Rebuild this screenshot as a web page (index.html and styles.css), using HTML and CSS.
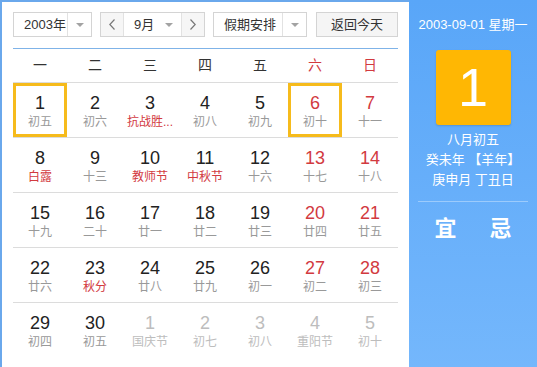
FILE: index.html
```html
<!DOCTYPE html>
<html lang="zh-CN">
<head>
  <meta charset="UTF-8" />
  <title>万年历</title>
  <link rel="stylesheet" href="styles.css">
</head>
<body>
  <div class="cal">
    <div class="main">
      <div class="toolbar">
        <div class="select year">
          <span class="label">2003年</span>
          <span class="drop"><i class="caret"></i></span>
        </div>
        <div class="select month">
          <span class="arrow"><svg width="6" height="11" viewBox="0 0 6 11"><polyline points="5.5,0.5 0.8,5.5 5.5,10.5" fill="none" stroke="#777" stroke-width="1.2"/></svg></span>
          <span class="label">9月<i class="caret"></i></span>
          <span class="arrow"><svg width="6" height="11" viewBox="0 0 6 11"><polyline points="0.5,0.5 5.2,5.5 0.5,10.5" fill="none" stroke="#777" stroke-width="1.2"/></svg></span>
        </div>
        <div class="select holiday">
          <span class="label">假期安排</span>
          <span class="drop"><i class="caret"></i></span>
        </div>
        <div class="today-btn">返回今天</div>
      </div>

      <div class="weekhead">
        <span>一</span><span>二</span><span>三</span><span>四</span><span>五</span><span class="red">六</span><span class="red">日</span>
      </div>

      <div class="days">
        <div class="cell"><div class="day selected"><b>1</b><small>初五</small></div></div>
        <div class="cell"><div class="day"><b>2</b><small>初六</small></div></div>
        <div class="cell"><div class="day"><b>3</b><small class="red">抗战胜...</small></div></div>
        <div class="cell"><div class="day"><b>4</b><small>初八</small></div></div>
        <div class="cell"><div class="day"><b>5</b><small>初九</small></div></div>
        <div class="cell"><div class="day weekend selected"><b>6</b><small>初十</small></div></div>
        <div class="cell"><div class="day weekend"><b>7</b><small>十一</small></div></div>

        <div class="cell"><div class="day"><b>8</b><small class="red">白露</small></div></div>
        <div class="cell"><div class="day"><b>9</b><small>十三</small></div></div>
        <div class="cell"><div class="day"><b>10</b><small class="red">教师节</small></div></div>
        <div class="cell"><div class="day"><b>11</b><small class="red">中秋节</small></div></div>
        <div class="cell"><div class="day"><b>12</b><small>十六</small></div></div>
        <div class="cell"><div class="day weekend"><b>13</b><small>十七</small></div></div>
        <div class="cell"><div class="day weekend"><b>14</b><small>十八</small></div></div>

        <div class="cell"><div class="day"><b>15</b><small>十九</small></div></div>
        <div class="cell"><div class="day"><b>16</b><small>二十</small></div></div>
        <div class="cell"><div class="day"><b>17</b><small>廿一</small></div></div>
        <div class="cell"><div class="day"><b>18</b><small>廿二</small></div></div>
        <div class="cell"><div class="day"><b>19</b><small>廿三</small></div></div>
        <div class="cell"><div class="day weekend"><b>20</b><small>廿四</small></div></div>
        <div class="cell"><div class="day weekend"><b>21</b><small>廿五</small></div></div>

        <div class="cell"><div class="day"><b>22</b><small>廿六</small></div></div>
        <div class="cell"><div class="day"><b>23</b><small class="red">秋分</small></div></div>
        <div class="cell"><div class="day"><b>24</b><small>廿八</small></div></div>
        <div class="cell"><div class="day"><b>25</b><small>廿九</small></div></div>
        <div class="cell"><div class="day"><b>26</b><small>初一</small></div></div>
        <div class="cell"><div class="day weekend"><b>27</b><small>初二</small></div></div>
        <div class="cell"><div class="day weekend"><b>28</b><small>初三</small></div></div>

        <div class="cell last"><div class="day"><b>29</b><small>初四</small></div></div>
        <div class="cell last"><div class="day"><b>30</b><small>初五</small></div></div>
        <div class="cell last"><div class="day other"><b>1</b><small>国庆节</small></div></div>
        <div class="cell last"><div class="day other"><b>2</b><small>初七</small></div></div>
        <div class="cell last"><div class="day other"><b>3</b><small>初八</small></div></div>
        <div class="cell last"><div class="day other"><b>4</b><small>重阳节</small></div></div>
        <div class="cell last"><div class="day other"><b>5</b><small>初十</small></div></div>
      </div>
    </div>

    <div class="side">
      <div class="side-date">2003-09-01 星期一</div>
      <div class="big-day">1</div>
      <div class="lunar">
        <p>八月初五</p>
        <p>癸未年 【羊年】</p>
        <p>庚申月 丁丑日</p>
      </div>
      <div class="yiji"><span>宜</span><span>忌</span></div>
    </div>
  </div>
</body>
</html>
```

FILE: styles.css
```css
body {
  margin: 0;
  background: #fff;
}
.cal {
  display: flex;
  width: 537px;
  height: 367px;
  font-family: "Liberation Sans", "Noto Sans CJK SC", sans-serif;
  color: #222;
}
.main {
  box-sizing: border-box;
  width: 409px;
  border-left: 2px solid #6aa8ec;
  border-top: 2px solid #6aa8ec;
  padding: 10px 11px 0 11px;
  background: #fff;
}
.toolbar {
  display: flex;
  height: 25px;
  font-size: 13px;
  color: #333;
}
.select {
  display: flex;
  box-sizing: border-box;
  height: 25px;
  border: 1px solid #d4d4d4;
  background: #fff;
}
.select .label {
  flex: 1;
  padding-left: 10px;
  line-height: 23px;
}
.select .drop {
  width: 23px;
  border-left: 1px solid #e2e2e2;
  display: flex;
  align-items: center;
  justify-content: center;
}
.caret {
  display: inline-block;
  width: 0;
  height: 0;
  border-left: 4px solid transparent;
  border-right: 4px solid transparent;
  border-top: 4px solid #a3a3a3;
}
.year {
  width: 79px;
}
.month {
  width: 105px;
  margin-left: 8px;
}
.month .arrow {
  width: 22px;
  background: #f6f6f6;
  display: flex;
  align-items: center;
  justify-content: center;
}
.month .arrow:first-child {
  border-right: 1px solid #e2e2e2;
}
.month .arrow:last-child {
  border-left: 1px solid #e2e2e2;
}
.month .label {
  display: flex;
  align-items: center;
  justify-content: space-between;
  padding: 0 8px 0 10px;
}
.holiday {
  width: 94px;
  margin-left: 8px;
}
.today-btn {
  box-sizing: border-box;
  width: 82px;
  height: 25px;
  margin-left: 9px;
  border: 1px solid #d4d4d4;
  background: #f5f5f5;
  text-align: center;
  line-height: 23px;
}
.weekhead {
  display: grid;
  grid-template-columns: repeat(7, 55px);
  margin-top: 11px;
  border-top: 1px solid #7fb3e8;
  border-bottom: 1px solid #dcdcdc;
  height: 33px;
  line-height: 33px;
  font-size: 14px;
  color: #333;
}
.weekhead span {
  text-align: center;
  padding-right: 1px;
}
.red {
  color: #d23a3f !important;
}
.days {
  display: grid;
  grid-template-columns: repeat(7, 55px);
}
.cell {
  height: 54px;
  border-bottom: 1px solid #dcdcdc;
}
.cell.last {
  border-bottom: none;
}
.day {
  box-sizing: border-box;
  width: 54px;
  height: 54px;
  border: 3px solid transparent;
  padding-top: 6px;
  text-align: center;
}
.day.selected {
  border-color: #f6bb1c;
}
.day b {
  display: block;
  font-weight: normal;
  font-size: 18px;
  line-height: 22px;
  color: #222;
}
.day small {
  display: block;
  font-size: 12px;
  line-height: 16px;
  color: #999;
  white-space: nowrap;
}
.day.weekend b {
  color: #d23a3f;
}
.day.other b,
.day.other small {
  color: #bdbdbd;
}
.side {
  width: 128px;
  background: linear-gradient(#59a6f8, #74b7fc);
  color: #fff;
  text-align: center;
  padding-top: 16px;
  box-sizing: border-box;
}
.side-date {
  font-size: 13px;
  line-height: 18px;
}
.big-day {
  width: 75px;
  height: 75px;
  margin: 16px auto 0;
  background: #ffb703;
  border-radius: 3px;
  box-shadow: 0 1px 2px rgba(0, 0, 0, 0.15);
  font-size: 54px;
  line-height: 75px;
}
.lunar {
  margin-top: 5px;
  font-size: 13px;
}
.lunar p {
  margin: 0;
  line-height: 20px;
}
.yiji {
  margin: 11px 9px 0;
  border-top: 1px solid rgba(255, 255, 255, 0.35);
  padding-top: 12px;
  display: flex;
  justify-content: center;
  gap: 33px;
  font-size: 22px;
  line-height: 30px;
  font-weight: bold;
}
```
